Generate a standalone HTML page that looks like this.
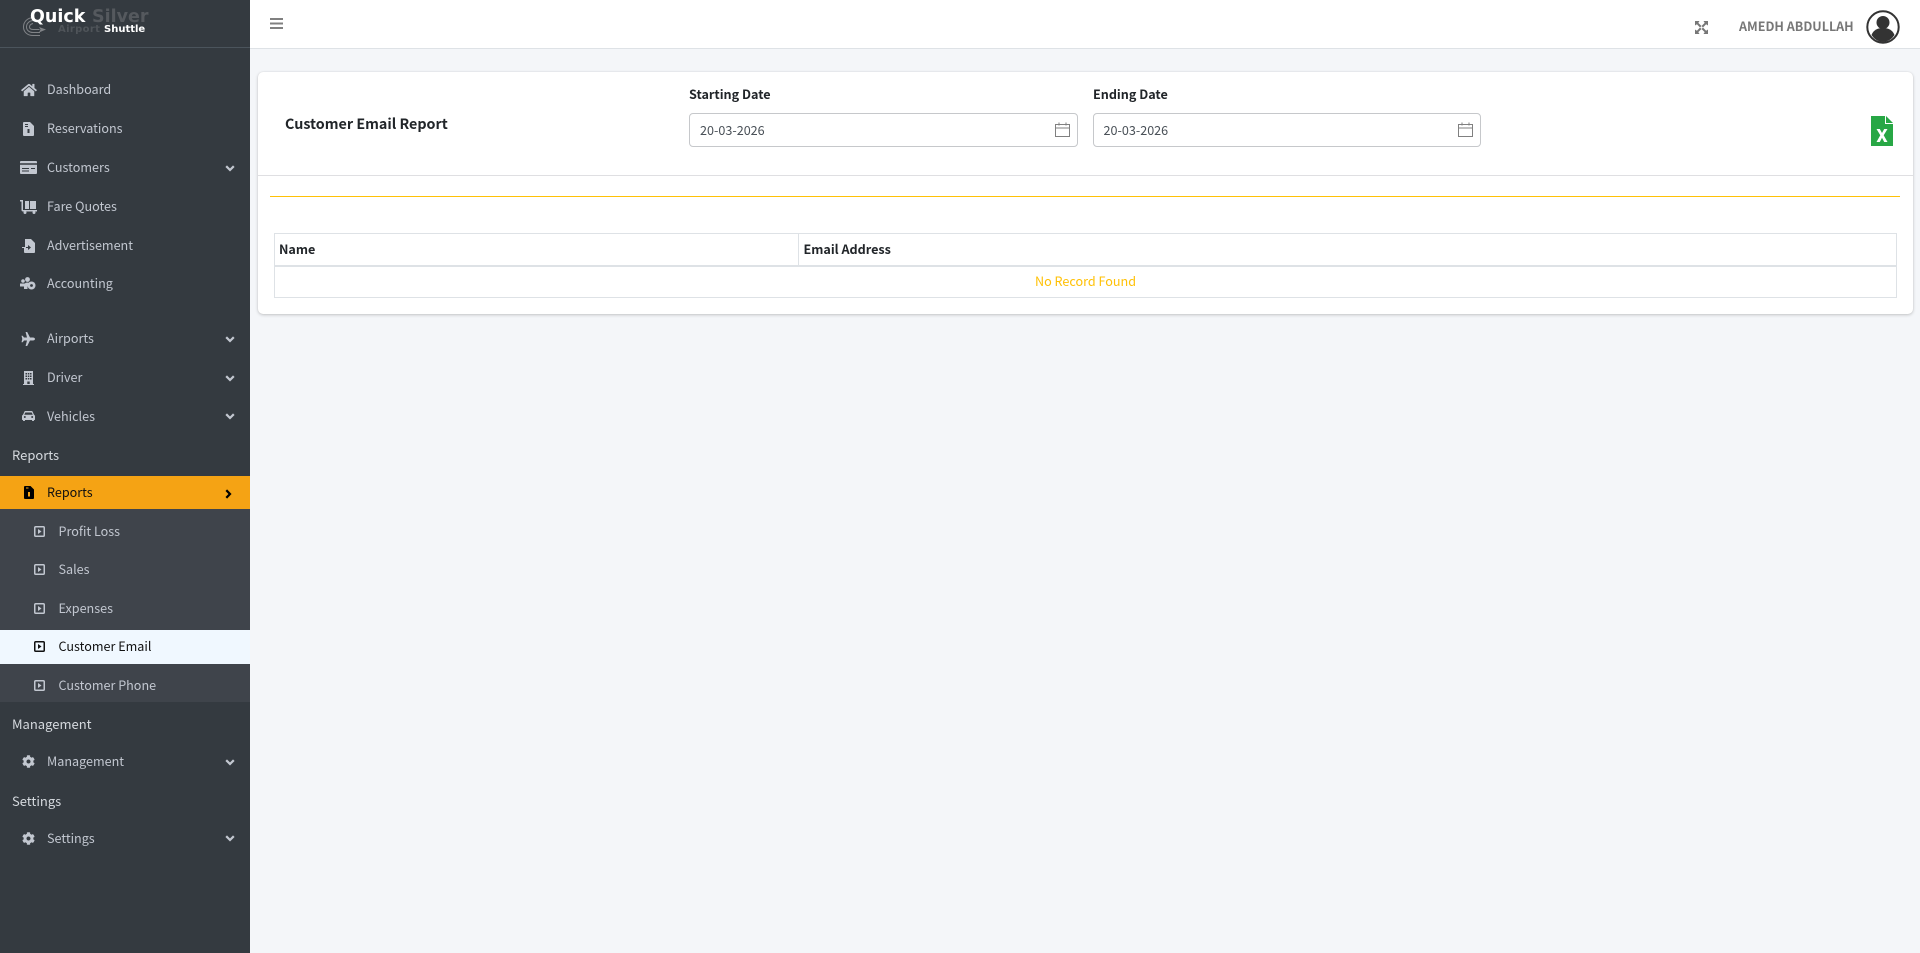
<!DOCTYPE html>
<html><head><meta charset="utf-8"><title>Customer Email Report</title>
<style>
*{box-sizing:border-box}
html,body{margin:0;padding:0;width:1920px;height:953px;overflow:hidden;background:#f4f6f9}
body{font-family:"Noto Sans CJK JP","Liberation Sans",sans-serif;font-size:12.6px;color:#212529;position:relative}
.a{position:absolute}
.t{position:absolute;line-height:20px;white-space:nowrap}
#side{position:absolute;left:0;top:0;width:250px;height:953px;background:#343a40}
.m{color:#c2c7d0;font-size:12.6px;left:47px}
.g{color:#d5d9de;font-size:13px;left:12px}
.s{color:#c2c7d0;font-size:12.6px;left:58.500px}
svg{position:absolute;display:block}
.ic{fill:#c2c7d0}
</style></head><body>
<div id="side">
 <div class="a" style="left:0;top:47px;width:250px;height:1px;background:#4b545c"></div>
 <svg style="left:22px;top:15px" width="26" height="24" viewBox="0 0 26 24" fill="none" stroke="#808387" stroke-width="1"><path d="M11 2.500C5 3 1.500 7 1.500 12s4 8.500 9.500 8.500h7M11 5.500C7 6 4.500 8.500 4.500 12s3 5.500 6.500 5.500h7M11 8.500C9 9 7.500 10 7.500 12s2 2.500 4 2.500h6"/><path d="M17 12l7 2.500-7 3 1.500-3z" fill="#808387" stroke="none"/></svg>
 <div class="t" style="left:30px;top:7px;font:bold 17.500px/20px 'DejaVu Sans',sans-serif;color:#fff">Quick</div>
 <div class="t" style="left:92px;top:7px;font:bold 17.500px/20px 'DejaVu Sans',sans-serif;color:#55595e">Silver</div>
 <div class="t" style="left:58px;top:20px;font:bold 10px/20px 'DejaVu Sans',sans-serif;color:#4f5459;letter-spacing:.35px">Airport</div>
 <div class="t" style="left:104px;top:20px;font:bold 10px/20px 'DejaVu Sans',sans-serif;color:#fff">Shuttle</div>

 <div class="t m" style="top:79px">Dashboard</div>
 <div class="t m" style="top:118px">Reservations</div>
 <div class="t m" style="top:157px">Customers</div>
 <div class="t m" style="top:196px">Fare Quotes</div>
 <div class="t m" style="top:235px">Advertisement</div>
 <div class="t m" style="top:273px">Accounting</div>
 <div class="t m" style="top:328px">Airports</div>
 <div class="t m" style="top:367px">Driver</div>
 <div class="t m" style="top:406px">Vehicles</div>
 <div class="t g" style="top:445px">Reports</div>

 <!-- icons -->
 <svg style="left:21px;top:83px" width="16" height="14" viewBox="0 0 576 512"><path class="ic" d="M280.37 148.26L96 300.11V464a16 16 0 0 0 16 16l112.06-.29a16 16 0 0 0 15.92-16V368a16 16 0 0 1 16-16h64a16 16 0 0 1 16 16v95.64a16 16 0 0 0 16 16.05L464 480a16 16 0 0 0 16-16V300L295.67 148.26a12.19 12.19 0 0 0-15.3 0zM571.6 251.47L488 182.56V44.05a12 12 0 0 0-12-12h-56a12 12 0 0 0-12 12v72.61L318.47 43a48 48 0 0 0-61 0L4.34 251.47a12 12 0 0 0-1.6 16.9l25.5 31A12 12 0 0 0 45.15 301l235.22-193.74a12.19 12.19 0 0 1 15.3 0L530.9 301a12 12 0 0 0 16.9-1.6l25.5-31a12 12 0 0 0-1.7-16.93z"/></svg>
 <svg style="left:23px;top:122px" width="11" height="14" viewBox="0 0 11 14"><path class="ic" d="M1 0h6l4 4v9a1 1 0 0 1-1 1H1a1 1 0 0 1-1-1V1a1 1 0 0 1 1-1z"/><rect x="2" y="2" width="3" height="1" fill="#343a40"/><rect x="2" y="4" width="3" height="1" fill="#343a40"/><rect x="4.500" y="7" width="2" height="4" fill="#343a40"/></svg>
 <svg style="left:20px;top:161px" width="17" height="13" viewBox="0 0 17 13"><rect width="17" height="13" rx="1" class="ic"/><rect y="2" width="17" height="2" fill="#343a40" opacity=".75"/><rect x="2" y="7" width="7" height="1" fill="#343a40"/><rect x="11" y="7" width="4" height="1" fill="#343a40"/><rect x="2" y="9.500" width="7" height="1" fill="#343a40"/></svg>
 <svg style="left:20px;top:200px" width="17" height="14" viewBox="0 0 17 14"><path class="ic" d="M0 0h3v10h14v1.500H3a1.500 1.500 0 0 1-1.500-1.500V1.500H0z"/><rect x="5" y="1" width="4" height="8" class="ic"/><rect x="10" y="1" width="6" height="8" class="ic"/><circle cx="5" cy="12.500" r="1.500" class="ic"/><circle cx="14" cy="12.500" r="1.500" class="ic"/></svg>
 <svg style="left:22px;top:239px" width="13" height="14" viewBox="0 0 13 14"><path class="ic" d="M3 0h6l4 4v9a1 1 0 0 1-1 1H3a1 1 0 0 1-1-1V9h4v2l3-2.500L6 6v2H3z"/><path class="ic" d="M0 8h4v1H0z"/></svg>
 <svg style="left:20px;top:277px" width="16" height="13" viewBox="0 0 16 13"><circle cx="3" cy="4" r="1.800" class="ic"/><circle cx="7.500" cy="2.500" r="2.400" class="ic"/><path class="ic" d="M0 6.500h5l-.5 3H0zM4 10c0-3 1-4.500 3.500-4.500l2 1-2 3V12H4z"/><circle cx="11.500" cy="8.500" r="4" class="ic"/><circle cx="11.500" cy="8.500" r="1.400" fill="#343a40"/></svg>
 <svg style="left:21px;top:332px" width="14" height="14" viewBox="0 0 14 14"><path class="ic" d="M14 7c0-.9-1.200-1.500-2-1.500H9L6.200 0H4.600L6 5.500H3L1.700 3.700H.5L1.300 7 .5 10.300h1.200L3 8.500h3L4.600 14h1.600L9 8.500h3c.8 0 2-.6 2-1.500z"/></svg>
 <svg style="left:23px;top:371px" width="11" height="14" viewBox="0 0 11 14"><path class="ic" d="M1 0h9v13h1v1H0v-1h1z"/><g fill="#343a40"><rect x="2.500" y="2" width="1.500" height="1.500"/><rect x="4.800" y="2" width="1.500" height="1.500"/><rect x="7" y="2" width="1.500" height="1.500"/><rect x="2.500" y="4.500" width="1.500" height="1.500"/><rect x="4.800" y="4.500" width="1.500" height="1.500"/><rect x="7" y="4.500" width="1.500" height="1.500"/><rect x="2.500" y="7" width="1.500" height="1.500"/><rect x="4.800" y="7" width="1.500" height="1.500"/><rect x="7" y="7" width="1.500" height="1.500"/><rect x="4.300" y="10.500" width="2.400" height="2.500"/></g></svg>
 <svg style="left:22px;top:411px" width="13" height="10" viewBox="0 0 13 10"><path class="ic" d="M2.500.5A1.500 1.500 0 0 1 4 0h5a1.500 1.500 0 0 1 1.500.5L12 3.800c.6.300 1 .9 1 1.500V8.500a.5.5 0 0 1-.5.500H12v.5a.5.5 0 0 1-.5.5h-1a.5.500 0 0 1-.5-.5V9H3v.5a.5.500 0 0 1-.5.5h-1a.5.500 0 0 1-.5-.5V9H.5A.5.500 0 0 1 0 8.500V5.300c0-.6.400-1.200 1-1.500z"/><path d="M3.300 1.500h6.400l1 2.300H2.300z" fill="#343a40"/><circle cx="2.800" cy="6" r="1" fill="#343a40"/><circle cx="10.200" cy="6" r="1" fill="#343a40"/></svg>

 <!-- chevrons -->
 <svg style="left:225px;top:165px" width="10" height="7" viewBox="0 0 10 7"><path d="M1.200 1.200L5 5l3.800-3.800" fill="none" stroke="#c2c7d0" stroke-width="2.200"/></svg>
 <svg style="left:225px;top:336px" width="10" height="7" viewBox="0 0 10 7"><path d="M1.200 1.200L5 5l3.800-3.800" fill="none" stroke="#c2c7d0" stroke-width="2.200"/></svg>
 <svg style="left:225px;top:375px" width="10" height="7" viewBox="0 0 10 7"><path d="M1.200 1.200L5 5l3.800-3.800" fill="none" stroke="#c2c7d0" stroke-width="2.200"/></svg>
 <svg style="left:225px;top:413px" width="10" height="7" viewBox="0 0 10 7"><path d="M1.200 1.200L5 5l3.800-3.800" fill="none" stroke="#c2c7d0" stroke-width="2.200"/></svg>
 <svg style="left:225px;top:759px" width="10" height="7" viewBox="0 0 10 7"><path d="M1.200 1.200L5 5l3.800-3.800" fill="none" stroke="#c2c7d0" stroke-width="2.200"/></svg>
 <svg style="left:225px;top:835px" width="10" height="7" viewBox="0 0 10 7"><path d="M1.200 1.200L5 5l3.800-3.800" fill="none" stroke="#c2c7d0" stroke-width="2.200"/></svg>

 <!-- active + submenu -->
 <div class="a" style="left:0;top:476px;width:250px;height:33px;background:#f5a314"></div>
 <div class="t" style="left:47px;top:482px;color:#111">Reports</div>
 <svg style="left:24px;top:486px" width="10" height="13" viewBox="0 0 10 13"><path d="M1 0h5.500L10 3.500V12a1 1 0 0 1-1 1H1a1 1 0 0 1-1-1V1a1 1 0 0 1 1-1z" fill="#000"/><rect x="4" y="6" width="2" height="4.500" fill="#f6a314"/><rect x="2" y="1.500" width="2.500" height="1" fill="#f6a314"/></svg>
 <svg style="left:225px;top:489px" width="7" height="10" viewBox="0 0 7 10"><path d="M1.300 1.200L5 5 1.300 8.800" fill="none" stroke="#000" stroke-width="2.200"/></svg>

 <div class="a" style="left:0;top:509px;width:250px;height:193px;background:#3f444b"></div>
 <div class="a" style="left:0;top:630px;width:250px;height:34px;background:#f0f8ff"></div>
 <div class="t s" style="top:521px">Profit Loss</div>
 <div class="t s" style="top:559px">Sales</div>
 <div class="t s" style="top:598px">Expenses</div>
 <div class="t s" style="top:636px;color:#111">Customer Email</div>
 <div class="t s" style="top:675px">Customer Phone</div>

 <svg style="left:34px;top:526px" width="11" height="11" viewBox="0 0 11 11"><rect x=".75" y=".75" width="9.500" height="9.500" rx="1" fill="none" stroke="#c2c7d0" stroke-width="1.500"/><path d="M4 3l3.500 2.500L4 8z" fill="#c2c7d0"/></svg>
 <svg style="left:34px;top:564px" width="11" height="11" viewBox="0 0 11 11"><rect x=".75" y=".75" width="9.500" height="9.500" rx="1" fill="none" stroke="#c2c7d0" stroke-width="1.500"/><path d="M4 3l3.500 2.500L4 8z" fill="#c2c7d0"/></svg>
 <svg style="left:34px;top:603px" width="11" height="11" viewBox="0 0 11 11"><rect x=".75" y=".75" width="9.500" height="9.500" rx="1" fill="none" stroke="#c2c7d0" stroke-width="1.500"/><path d="M4 3l3.500 2.500L4 8z" fill="#c2c7d0"/></svg>
 <svg style="left:34px;top:641px" width="11" height="11" viewBox="0 0 11 11"><rect x=".75" y=".75" width="9.500" height="9.500" rx="1" fill="none" stroke="#111" stroke-width="1.500"/><path d="M4 3l3.500 2.500L4 8z" fill="#111"/></svg>
 <svg style="left:34px;top:680px" width="11" height="11" viewBox="0 0 11 11"><rect x=".75" y=".75" width="9.500" height="9.500" rx="1" fill="none" stroke="#c2c7d0" stroke-width="1.500"/><path d="M4 3l3.500 2.500L4 8z" fill="#c2c7d0"/></svg>

 <div class="t g" style="top:714px">Management</div>
 <div class="t m" style="top:751px">Management</div>
 <div class="t g" style="top:791px">Settings</div>
 <div class="t m" style="top:828px">Settings</div>
 <svg style="left:22px;top:755px" width="13" height="13" viewBox="0 0 512 512"><path class="ic" d="M487.400 315.700l-42.600-24.600c4.300-23.200 4.300-47 0-70.200l42.600-24.600c4.900-2.800 7.100-8.600 5.500-14-11.100-35.600-30-67.800-54.700-94.600-3.800-4.100-10-5.100-14.800-2.300L380.800 110c-17.900-15.400-38.500-27.300-60.800-35.100V25.800c0-5.600-3.900-10.500-9.400-11.700-36.700-8.200-74.300-7.800-109.200 0-5.500 1.200-9.400 6.100-9.400 11.700V75c-22.200 7.900-42.800 19.800-60.800 35.100L88.700 85.500c-4.900-2.800-11-1.900-14.800 2.300-24.700 26.700-43.600 58.900-54.700 94.600-1.700 5.400.6 11.200 5.500 14L67.300 221c-4.300 23.200-4.300 47 0 70.200l-42.600 24.600c-4.900 2.800-7.100 8.600-5.500 14 11.100 35.600 30 67.800 54.700 94.600 3.800 4.100 10 5.100 14.800 2.300l42.600-24.600c17.900 15.400 38.500 27.300 60.800 35.100v49.200c0 5.600 3.900 10.500 9.400 11.700 36.700 8.200 74.300 7.800 109.200 0 5.500-1.200 9.400-6.100 9.400-11.700v-49.200c22.200-7.900 42.800-19.800 60.800-35.100l42.600 24.600c4.900 2.800 11 1.900 14.800-2.300 24.700-26.700 43.600-58.900 54.700-94.600 1.500-5.500-.7-11.300-5.600-14.100zM256 336c-44.100 0-80-35.900-80-80s35.900-80 80-80 80 35.900 80 80-35.900 80-80 80z"/></svg>
 <svg style="left:22px;top:832px" width="13" height="13" viewBox="0 0 512 512"><path class="ic" d="M487.400 315.700l-42.600-24.600c4.300-23.200 4.300-47 0-70.200l42.600-24.600c4.900-2.800 7.100-8.600 5.500-14-11.100-35.600-30-67.800-54.700-94.600-3.800-4.100-10-5.100-14.800-2.300L380.800 110c-17.900-15.400-38.500-27.300-60.800-35.100V25.800c0-5.600-3.900-10.500-9.400-11.700-36.700-8.200-74.300-7.800-109.200 0-5.500 1.200-9.400 6.100-9.400 11.700V75c-22.200 7.900-42.800 19.800-60.800 35.100L88.700 85.500c-4.900-2.800-11-1.900-14.800 2.300-24.700 26.700-43.600 58.900-54.700 94.600-1.700 5.400.6 11.200 5.500 14L67.300 221c-4.300 23.200-4.300 47 0 70.200l-42.600 24.600c-4.900 2.800-7.100 8.600-5.500 14 11.100 35.600 30 67.800 54.700 94.600 3.800 4.100 10 5.100 14.800 2.300l42.600-24.600c17.900 15.400 38.500 27.300 60.800 35.100v49.200c0 5.600 3.900 10.500 9.400 11.700 36.700 8.200 74.300 7.800 109.200 0 5.500-1.200 9.400-6.100 9.400-11.700v-49.200c22.200-7.900 42.800-19.800 60.800-35.100l42.600 24.600c4.900 2.800 11 1.900 14.800-2.300 24.700-26.700 43.600-58.900 54.700-94.600 1.500-5.500-.7-11.300-5.600-14.100zM256 336c-44.100 0-80-35.900-80-80s35.900-80 80-80 80 35.900 80 80-35.900 80-80 80z"/></svg>
</div>

<!-- header -->
<div class="a" style="left:250px;top:0;width:1670px;height:49px;background:#fff;border-bottom:1px solid #dee2e6"></div>
<svg style="left:270px;top:18px" width="13" height="12" viewBox="0 0 13 12"><g fill="#808080"><rect y="0" width="13" height="2"/><rect y="4.500" width="13" height="2"/><rect y="9" width="13" height="2"/></g></svg>
<svg style="left:1695px;top:21px" width="13" height="13" viewBox="0 0 13 13"><path d="M0 0h4.500L3.300 1.900 6.500 5 5 6.500 1.900 3.300 0 4.500zM13 0v4.500L11.100 3.300 8 6.500 6.500 5l3.200-3.100L8.500 0zM0 13V8.500l1.900 1.200L5 6.500 6.500 8 3.300 11.100 4.500 13zM13 13H8.500l1.200-1.900L6.500 8 8 6.500l3.100 3.200L13 8.500z" fill="#777"/></svg>
<div class="t" style="left:1739px;top:16px;font-weight:700;font-size:12.550px;color:#777">AMEDH ABDULLAH</div>
<svg style="left:1866px;top:10px" width="34" height="34" viewBox="0 0 34 34"><circle cx="17" cy="17" r="15.700" fill="#fff" stroke="#333" stroke-width="2"/><circle cx="17" cy="12.500" r="6.500" fill="#333"/><path d="M5.500 25c2-5 6-7 11.500-7s9.500 2 11.500 7A15 15 0 0 1 17 32 15 15 0 0 1 5.500 25z" fill="#333"/></svg>

<!-- card -->
<div class="a" style="left:258px;top:72px;width:1655px;height:242px;background:#fff;border-radius:5px;box-shadow:0 0 1px rgba(0,0,0,.13),0 1px 3px rgba(0,0,0,.2)"></div>
<div class="a" style="left:258px;top:175px;width:1655px;height:1px;background:#dfdfe2"></div>
<div class="t" style="left:285px;top:114px;font-weight:700;font-size:14.300px;color:#212529">Customer Email Report</div>
<div class="t" style="left:689px;top:84px;font-weight:700">Starting Date</div>
<div class="t" style="left:1093px;top:84px;font-weight:700">Ending Date</div>
<div class="a" style="left:689px;top:113px;width:389px;height:34px;border:1px solid #c6c8cb;border-radius:4px"></div>
<div class="a" style="left:1093px;top:113px;width:388px;height:34px;border:1px solid #c6c8cb;border-radius:4px"></div>
<div class="t" style="left:700px;top:120px;color:#495057">20-03-2026</div>
<div class="t" style="left:1103.500px;top:120px;color:#495057">20-03-2026</div>
<svg style="left:1054.500px;top:122px" width="15" height="15" viewBox="0 0 15 15"><path d="M.5 2.500h14v12H.5zM.5 6h14M4 .5v3M11 .5v3" fill="none" stroke="#808080" stroke-width="1"/></svg>
<svg style="left:1457.500px;top:122px" width="15" height="15" viewBox="0 0 15 15"><path d="M.5 2.500h14v12H.5zM.5 6h14M4 .5v3M11 .5v3" fill="none" stroke="#808080" stroke-width="1"/></svg>
<svg style="left:1871px;top:116px" width="22" height="30" viewBox="0 0 22 30"><path d="M0 0h14v8h8v22H0z" fill="#28a745"/><path d="M15 0l7 7h-7z" fill="#28a745"/><path d="M5.500 13h3.300L11 17l2.200-4h3.300l-3.800 6.300 3.800 6.700h-3.300L11 21.800 8.800 26H5.500l3.800-6.700z" fill="#fff"/></svg>
<div class="a" style="left:270px;top:196px;width:1630px;height:1px;background:#ffc107"></div>

<!-- table -->
<div class="a" style="left:274px;top:233px;width:1623px;height:65px;border:1px solid #dee2e6"></div>
<div class="a" style="left:275px;top:265px;width:1621px;height:2px;background:#dee2e6"></div>
<div class="a" style="left:798px;top:233px;width:1px;height:33px;background:#dee2e6"></div>
<div class="t" style="left:279px;top:239px;font-weight:700">Name</div>
<div class="t" style="left:803.500px;top:239px;font-weight:700">Email Address</div>
<div class="t" style="left:1035px;top:271px;color:#ffc107">No Record Found</div>
</body></html>
